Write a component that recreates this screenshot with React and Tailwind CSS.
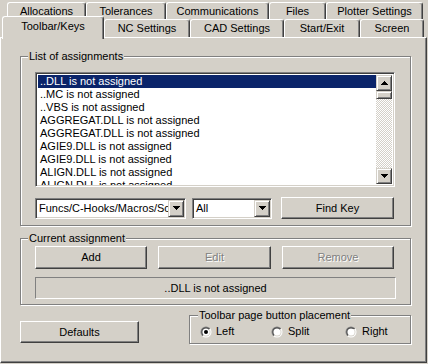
import React from "react";

const raised =
  "border border-t-white border-l-white border-r-[#404040] border-b-[#404040] shadow-[inset_-1px_-1px_0_#808080] bg-[#d4d0c8]";
const sunken =
  "border border-t-[#808080] border-l-[#808080] border-r-white border-b-white shadow-[inset_1px_1px_0_#404040,inset_-1px_-1px_0_#d4d0c8]";
const sbtn =
  "border border-t-[#d4d0c8] border-l-[#d4d0c8] border-r-[#404040] border-b-[#404040] shadow-[inset_1px_1px_0_#fff,inset_-1px_-1px_0_#808080] bg-[#d4d0c8]";
const etched = "border border-[#808080] shadow-[inset_1px_1px_0_#fff,1px_1px_0_#fff]";
const tabBase =
  "flex justify-center border-t border-l border-white border-r border-r-[#404040] shadow-[inset_-1px_0_0_#808080] rounded-t-[3px] bg-[#d4d0c8] whitespace-nowrap";

function Up() {
  return (
    <svg width="7" height="4" viewBox="0 0 7 4" shapeRendering="crispEdges">
      <rect x="3" y="0" width="1" height="1" fill="#000" />
      <rect x="2" y="1" width="3" height="1" fill="#000" />
      <rect x="1" y="2" width="5" height="1" fill="#000" />
      <rect x="0" y="3" width="7" height="1" fill="#000" />
    </svg>
  );
}
function Down() {
  return (
    <svg width="7" height="4" viewBox="0 0 7 4" shapeRendering="crispEdges">
      <rect x="0" y="0" width="7" height="1" fill="#000" />
      <rect x="1" y="1" width="5" height="1" fill="#000" />
      <rect x="2" y="2" width="3" height="1" fill="#000" />
      <rect x="3" y="3" width="1" height="1" fill="#000" />
    </svg>
  );
}

function Radio({ checked }) {
  return (
    <svg width="12" height="12" viewBox="0 0 12 12" className="shrink-0">
      <defs>
        <linearGradient id="rgo" x1="0" y1="0" x2="1" y2="1">
          <stop offset="0.5" stopColor="#808080" />
          <stop offset="0.5" stopColor="#ffffff" />
        </linearGradient>
        <linearGradient id="rgi" x1="0" y1="0" x2="1" y2="1">
          <stop offset="0.5" stopColor="#404040" />
          <stop offset="0.5" stopColor="#d4d0c8" />
        </linearGradient>
      </defs>
      <circle cx="6" cy="6" r="5.5" fill="url(#rgo)" />
      <circle cx="6" cy="6" r="4.5" fill="url(#rgi)" />
      <circle cx="6" cy="6" r="3.6" fill="#fff" />
      {checked && <circle cx="6" cy="6" r="2" fill="#000" />}
    </svg>
  );
}

const items = [
  "..DLL is not assigned",
  "..MC is not assigned",
  "..VBS is not assigned",
  "AGGREGAT.DLL is not assigned",
  "AGGREGAT.DLL is not assigned",
  "AGIE9.DLL is not assigned",
  "AGIE9.DLL is not assigned",
  "ALIGN.DLL is not assigned",
  "ALIGN.DLL is not assigned",
];

const disabledText = "text-[#808080] [text-shadow:1px_1px_0_#fff]";

export default function App() {
  return (
    <div className="w-[428px] h-[364px] bg-[#d4d0c8] overflow-hidden text-[11px] leading-[13px] text-black font-['Liberation_Sans',Arial,sans-serif]">
      {/* Tab row 1 */}
      <div className="flex h-[19px] pt-[2px] pl-[7px]">
        <div className={`${tabBase} w-[79px] h-[17px] items-center`}>Allocations</div>
        <div className={`${tabBase} w-[80px] h-[17px] items-center`}>Tolerances</div>
        <div className={`${tabBase} w-[103px] h-[17px] items-center`}>Communications</div>
        <div className={`${tabBase} w-[57px] h-[17px] items-center`}>Files</div>
        <div className={`${tabBase} w-[97px] h-[17px] items-center`}>Plotter Settings</div>
      </div>
      {/* Tab row 2 */}
      <div className="flex h-[18px] items-end pl-[2px] relative z-10">
        <div className={`${tabBase} w-[102px] h-[23px] -mb-[2px] items-start pt-[3px]`}>Toolbar/Keys</div>
        <div className={`${tabBase} w-[86px] h-[18px] items-center`}>NC Settings</div>
        <div className={`${tabBase} w-[94px] h-[18px] items-center`}>CAD Settings</div>
        <div className={`${tabBase} w-[76px] h-[18px] items-center`}>Start/Exit</div>
        <div className={`${tabBase} w-[64px] h-[18px] items-center`}>Screen</div>
      </div>

      {/* Panel */}
      <div className="w-[427px] h-[326px] border border-white border-r-[#404040] border-b-[#404040] shadow-[inset_-1px_-1px_0_#808080] pl-[19px] pt-[18px] flex flex-col">
        {/* Group 1 */}
        <div className={`${etched} w-[391px] h-[170px] pl-[14px] flex flex-col`}>
          <div className="-mt-[7px] -ml-[7px] w-fit px-[1px] bg-[#d4d0c8] leading-[13px]">List of assignments</div>
          <div className={`${sunken} mt-[9px] w-[360px] h-[115px] bg-white flex p-[1px]`}>
            <div className="flex-1 overflow-hidden pl-[1px] pt-[1px]">
              {items.map((t, i) => (
                <div
                  key={i}
                  className={
                    i === 0
                      ? "h-[13px] leading-[13px] pl-[2px] whitespace-nowrap bg-[#0a246a] text-white"
                      : "h-[13px] leading-[13px] pl-[2px] whitespace-nowrap"
                  }
                >
                  {t}
                </div>
              ))}
            </div>
            <div className="w-[16px] flex flex-col my-[1px] mr-[1px]">
              <div className={`${sbtn} h-[16px] flex items-center justify-center`}>
                <Up />
              </div>
              <div className={`${sbtn} h-[8px]`} />
              <div className="flex-1 bg-[repeating-conic-gradient(#ffffff_0_25%,#d4d0c8_0_50%)] bg-[length:2px_2px]" />
              <div className={`${sbtn} h-[16px] flex items-center justify-center`}>
                <Down />
              </div>
            </div>
          </div>
          <div className="mt-[10px] h-[22px] flex items-center">
            <div className={`${sunken} w-[151px] h-[21px] bg-white flex items-center p-[1px]`}>
              <div className="flex-1 overflow-hidden whitespace-nowrap pl-[2px]">Funcs/C-Hooks/Macros/Scripts</div>
              <div className={`${sbtn} w-[16px] h-[17px] flex items-center justify-center shrink-0`}>
                <Down />
              </div>
            </div>
            <div className={`${sunken} ml-[6px] w-[80px] h-[21px] bg-white flex items-center p-[1px]`}>
              <div className="flex-1 overflow-hidden whitespace-nowrap pl-[2px]">All</div>
              <div className={`${sbtn} w-[16px] h-[17px] flex items-center justify-center shrink-0`}>
                <Down />
              </div>
            </div>
            <div className={`${raised} ml-[9px] w-[113px] h-[22px] flex items-center justify-center`}>Find Key</div>
          </div>
        </div>

        {/* Group 2 */}
        <div className={`${etched} mt-[12px] w-[391px] h-[67px] pl-[14px] flex flex-col`}>
          <div className="-mt-[7px] -ml-[7px] w-fit px-[1px] bg-[#d4d0c8] leading-[13px]">Current assignment</div>
          <div className="mt-[1px] flex">
            <div className={`${raised} w-[112px] h-[23px] flex items-center justify-center`}>Add</div>
            <div className={`${raised} ml-[11px] w-[113px] h-[23px] flex items-center justify-center ${disabledText}`}>Edit</div>
            <div className={`${raised} ml-[11px] w-[112px] h-[23px] flex items-center justify-center ${disabledText}`}>Remove</div>
          </div>
          <div className="mt-[8px] w-[361px] h-[22px] border border-t-[#808080] border-l-[#808080] border-r-white border-b-white flex items-center justify-center">
            ..DLL is not assigned
          </div>
        </div>

        {/* Bottom row */}
        <div className="mt-[10px] w-[391px] flex items-end justify-between">
          <div className={`${raised} w-[119px] h-[22px] mb-[1px] flex items-center justify-center`}>Defaults</div>
          <div className={`${etched} w-[222px] h-[29px] flex flex-col`}>
            <div className="-mt-[7px] ml-[8px] w-fit px-[1px] bg-[#d4d0c8] leading-[13px]">Toolbar page button placement</div>
            <div className="mt-[3px] h-[13px] flex items-center pl-[10px]">
              <div className="w-[71px] flex items-center gap-[4px]">
                <Radio checked />
                <span>Left</span>
              </div>
              <div className="w-[74px] flex items-center gap-[5px]">
                <Radio />
                <span>Split</span>
              </div>
              <div className="flex items-center gap-[5px]">
                <Radio />
                <span>Right</span>
              </div>
            </div>
          </div>
        </div>
      </div>
    </div>
  );
}
